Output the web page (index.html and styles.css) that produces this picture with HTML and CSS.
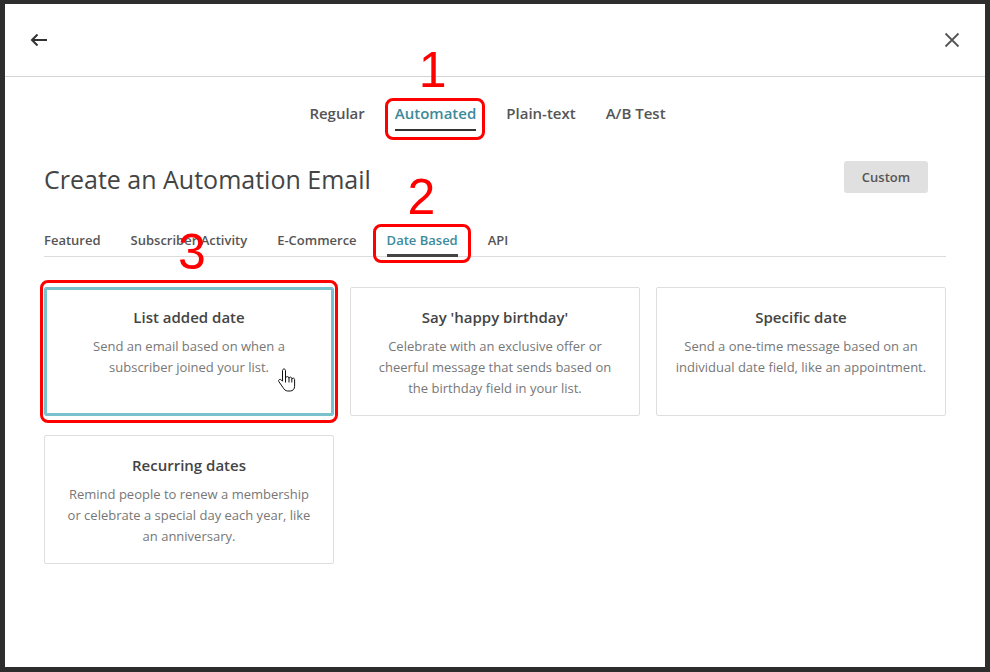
FILE: index.html
```html
<!DOCTYPE html>
<html lang="en">
<head>
<meta charset="utf-8">
<title>Create an Automation Email</title>
<link rel="stylesheet" href="styles.css">
</head>
<body>
<div class="modal">
  <header class="modal-head">
    <button class="icon-btn" aria-label="Back">
      <svg width="18" height="14" viewBox="0 0 18 14"><path d="M17 7H2M7.5 1.5L2 7l5.5 5.5" fill="none" stroke="#333" stroke-width="2"/></svg>
    </button>
    <button class="icon-btn" aria-label="Close">
      <svg width="16" height="16" viewBox="0 0 16 16"><path d="M1.5 1.5l13 13M14.5 1.5l-13 13" fill="none" stroke="#555" stroke-width="1.8"/></svg>
    </button>
  </header>

  <nav class="type-tabs">
    <a class="type-tab">Regular</a>
    <a class="type-tab active">Automated<span class="annot-box box1"></span><span class="annot-num num1">1</span></a>
    <a class="type-tab">Plain-text</a>
    <a class="type-tab">A/B Test</a>
  </nav>

  <section class="content">
    <div class="title-row">
      <h1 class="title">Create an Automation Email</h1>
      <button class="custom-btn">Custom</button>
    </div>

    <nav class="sub-tabs">
      <a class="sub-tab">Featured</a>
      <a class="sub-tab">Subscriber Activity</a>
      <a class="sub-tab">E-Commerce</a>
      <a class="sub-tab active">Date Based<span class="annot-box box2"></span><span class="annot-num num2">2</span></a>
      <a class="sub-tab">API</a>
    </nav>

    <div class="cards">
      <span class="annot-num num3">3</span>
      <div class="card selected">
        <span class="annot-box box3"></span>
        <h2 class="card-title">List added date</h2>
        <p class="card-desc">Send an email based on when a subscriber joined your list.</p>
        <svg class="cursor" width="18" height="24" viewBox="0 0 18 24"><path d="M6 1C5 1 4.5 1.8 4.5 2.6V13.2L3.4 12C2.6 11.2 1.5 11.2 0.9 11.9C0.4 12.5 0.6 13.3 1.1 13.9L5 19.6C6 21.2 7.4 23 9.6 23H12.2C14.8 23 16.6 21 16.6 18.3V11.6C16.6 10.8 16 10.1 15.2 10.1C14.4 10.1 13.8 10.7 13.8 11.5V10.6C13.8 9.8 13.2 9.1 12.4 9.1C11.6 9.1 11 9.7 11 10.5V10C11 9.2 10.4 8.6 9.6 8.6C8.8 8.6 7.5 9.2 7.5 10V2.6C7.5 1.8 7 1 6 1Z" fill="#fff" stroke="#111" stroke-width="1" stroke-linejoin="round"/><path d="M7.5 10V14.5M11 10.5V14.5M13.8 11.5V14.5" fill="none" stroke="#111" stroke-width="1"/></svg>
      </div>
      <div class="card">
        <h2 class="card-title">Say 'happy birthday'</h2>
        <p class="card-desc">Celebrate with an exclusive offer or cheerful message that sends based on the birthday field in your list.</p>
      </div>
      <div class="card">
        <h2 class="card-title">Specific date</h2>
        <p class="card-desc">Send a one-time message based on an individual date field, like an appointment.</p>
      </div>
      <div class="card">
        <h2 class="card-title">Recurring dates</h2>
        <p class="card-desc">Remind people to renew a membership or celebrate a special day each year, like an anniversary.</p>
      </div>
    </div>
  </section>
</div>
</body>
</html>
```

FILE: styles.css
```css
* { box-sizing: border-box; }
html, body { height: 100%; }
body {
  margin: 0;
  padding: 4px 5px 5px 5px;
  background: #2d2d2d;
  font-family: "Open Sans", "Liberation Sans", sans-serif;
  color: #444;
}
.modal {
  height: 100%;
  background: #fff;
  position: relative;
}
.modal-head {
  height: 73px;
  border-bottom: 1px solid #d4d4d4;
  display: flex;
  align-items: center;
  justify-content: space-between;
  padding: 0 25px 0 25px;
}
.icon-btn {
  border: 0;
  background: none;
  padding: 0;
  display: flex;
  cursor: pointer;
}
.type-tabs {
  display: flex;
  justify-content: center;
  gap: 30px;
  margin-top: 25px;
  padding-right: 15px;
}
.type-tab {
  position: relative;
  font-size: 15px;
  line-height: 22px;
  font-weight: 600;
  color: #555;
  padding-bottom: 5px;
  border-bottom: 2px solid transparent;
}
.type-tab.active {
  color: #3d8a9a;
  border-bottom-color: #333;
}
.content {
  padding: 0 39px;
}
.title-row {
  display: flex;
  justify-content: space-between;
  align-items: flex-start;
  margin-top: 30px;
}
.title {
  margin: 2px 0 0 0;
  font-size: 25px;
  line-height: 32px;
  font-weight: 400;
  color: #444;
}
.custom-btn {
  width: 84px;
  height: 32px;
  margin-right: 18px;
  border: 0;
  border-radius: 3px;
  background: #e0e0e0;
  color: #555;
  font-family: "Open Sans", sans-serif;
  font-size: 13px;
  font-weight: 600;
}
.sub-tabs {
  display: flex;
  gap: 30px;
  margin-top: 36px;
  border-bottom: 1px solid #dcdcdc;
  height: 26px;
}
.sub-tab {
  position: relative;
  font-size: 13px;
  line-height: 18px;
  font-weight: 600;
  color: #555;
  padding-bottom: 5px;
  border-bottom: 3px solid transparent;
  height: 26px;
}
.sub-tab.active {
  color: #3d8a9a;
  border-bottom-color: #444;
}
.cards {
  position: relative;
  margin-top: 30px;
  display: grid;
  grid-template-columns: repeat(3, 290px);
  grid-auto-rows: 129px;
  column-gap: 16px;
  row-gap: 19px;
}
.card {
  position: relative;
  border: 1px solid #dedede;
  border-radius: 2px;
  padding: 19px 18px 0;
  text-align: center;
}
.card.selected {
  border-color: #79c2cd;
  box-shadow: inset 0 0 0 2px #79c2cd;
}
.card-title {
  margin: 0;
  font-size: 15px;
  line-height: 20px;
  font-weight: 600;
  color: #444;
}
.card-desc {
  margin: 9px 0 0;
  font-size: 13px;
  line-height: 21px;
  color: #777;
}
.cursor {
  position: absolute;
  left: 233px;
  top: 80px;
}
.annot-box {
  position: absolute;
  border: 3px solid #f00;
  border-radius: 8px;
  pointer-events: none;
}
.box1 { left: -10px; top: -4px; width: 100px; height: 42px; }
.box2 { left: -14px; top: -7px; width: 98px; height: 39px; }
.box3 { left: -5px; top: -8px; width: 298px; height: 143px; }
.annot-num {
  position: absolute;
  font-family: "Liberation Sans", Arial, sans-serif;
  font-size: 50px;
  line-height: 50px;
  font-weight: 400;
  color: #f00;
}
.num1 { left: 24px; top: -57px; }
.num2 { left: 21px; top: -59px; }
.num3 { left: 134px; top: -60px; }
```
